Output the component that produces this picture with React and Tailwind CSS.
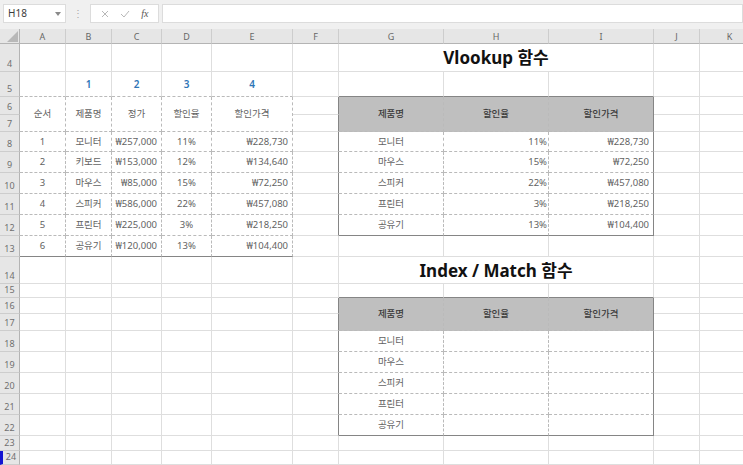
import { Fragment } from 'react';

const COLS = ['A', 'B', 'C', 'D', 'E', 'F', 'G', 'H', 'I', 'J', 'K'];
const ROWS = Array.from({ length: 21 }, (_, i) => i + 4);

// border per side: g = gridline, d = dashed table line, s = solid table frame
const RIGHT = {
  g: 'border-r border-r-[#dedede]',
  d: 'border-r border-r-[#bababa] [border-right-style:dashed]',
  s: 'border-r border-r-[#858585]',
};
const BOTTOM = {
  g: 'border-b border-b-[#dedede]',
  d: 'border-b border-b-[#bababa] [border-bottom-style:dashed]',
  s: 'border-b border-b-[#858585]',
};
const ALIGN = {
  c: 'justify-center',
  r: 'justify-end pr-[4px]',
  p: 'justify-end pr-[1px]',
};
const KIND = {
  txt: 'text-[9.5px] text-[#626262]',
  num: 'text-[10px] font-semibold text-[#2e75b6]',
  gh: 'text-[9.5px] font-medium text-[#3a3a3a] bg-[#bfbfbf]',
  title: 'text-[17px] font-bold text-[#111111]',
};
const SPAN = { c3: 'col-span-3', r2: 'row-span-2' };

const products = [
  ['1', '모니터', '₩257,000', '11%', '₩228,730'],
  ['2', '키보드', '₩153,000', '12%', '₩134,640'],
  ['3', '마우스', '₩85,000', '15%', '₩72,250'],
  ['4', '스피커', '₩586,000', '22%', '₩457,080'],
  ['5', '프린터', '₩225,000', '3%', '₩218,250'],
  ['6', '공유기', '₩120,000', '13%', '₩104,400'],
];
const lookup = [
  ['모니터', '11%', '₩228,730'],
  ['마우스', '15%', '₩72,250'],
  ['스피커', '22%', '₩457,080'],
  ['프린터', '3%', '₩218,250'],
  ['공유기', '13%', '₩104,400'],
];

const buildSheet = () => {
  const sheet = {};
  ROWS.forEach((n) => {
    sheet[n] = COLS.map(() => ({ r: 'g', b: 'g', a: 'c', k: 'txt' }));
  });
  const set = (row, col, props) => Object.assign(sheet[row][col], props);

  // titles
  set(4, 6, { t: 'Vlookup 함수', k: 'title', span: 'c3' });
  set(4, 7, { skip: true });
  set(4, 8, { skip: true });
  set(14, 6, { t: 'Index / Match 함수', k: 'title', span: 'c3' });
  set(14, 7, { skip: true });
  set(14, 8, { skip: true });

  // left table
  [1, 2, 3, 4].forEach((i) => set(5, i, { t: String(i), k: 'num' }));
  [0, 1, 2, 3, 4].forEach((c) => set(5, c, { b: 'd' }));
  ['순서', '제품명', '정가', '할인율', '할인가격'].forEach((t, c) => {
    set(6, c, { t, span: 'r2', r: 'd', b: 'd' });
    set(7, c, { skip: true });
  });
  const leftAlign = ['c', 'c', 'r', 'c', 'r'];
  products.forEach((row, i) => {
    const n = 8 + i;
    row.forEach((t, c) => set(n, c, { t, a: leftAlign[c], r: 'd', b: n === 13 ? 's' : 'd' }));
  });

  // lookup tables
  const header = ['제품명', '할인율', '할인가격'];
  const frame = (top, withValues) => {
    [6, 7, 8].forEach((c) => set(top - 1, c, { b: 's' }));
    for (let n = top; n < top + 7; n++) set(n, 5, { r: 's' });
    header.forEach((t, i) => {
      set(top, 6 + i, { t, k: 'gh', span: 'r2', r: i < 2 ? 'd' : 's', b: 'd' });
      set(top + 1, 6 + i, { skip: true });
    });
    lookup.forEach((row, i) => {
      const n = top + 2 + i;
      const b = i === 4 ? 's' : 'd';
      set(n, 6, { t: row[0], r: 'd', b });
      set(n, 7, { t: withValues ? row[1] : '', a: 'p', r: 'd', b });
      set(n, 8, { t: withValues ? row[2] : '', a: 'r', r: 's', b });
    });
  };
  frame(6, true);
  frame(16, false);
  return sheet;
};

const sheet = buildSheet();

const Cell = ({ cell }) => (
  <div
    className={`flex items-center overflow-hidden whitespace-nowrap leading-none ${RIGHT[cell.r]} ${BOTTOM[cell.b]} ${ALIGN[cell.a]} ${KIND[cell.k]} ${cell.span ? SPAN[cell.span] : ''}`}
  >
    {cell.t}
  </div>
);

const RowHead = ({ n }) => (
  <div
    className={`flex items-end justify-center pb-[3px] bg-[#e6e6e6] border-r border-r-[#b4b4b4] border-b border-b-[#cdcdcd] text-[9px] leading-none text-[#707070] ${n === 24 ? 'border-l-[3px] border-l-[#1414d2]' : ''}`}
  >
    {n}
  </div>
);

const Toolbar = () => (
  <div className="flex items-center h-[29px] bg-[#f0f0f0] pl-[3px] gap-[3px] pb-[2px]">
    <div className="flex items-center justify-between w-[63px] h-[19px] bg-white border border-[#dcdcdc] px-[4px] text-[10px] text-[#3c3c3c]">
      <span>H18</span>
      <svg width="6" height="4" viewBox="0 0 6 4">
        <path d="M0 0h6L3 4z" fill="#8a8a8a" />
      </svg>
    </div>
    <div className="w-[18px] flex justify-center text-[10px] text-[#a8a8a8]">⋮</div>
    <div className="flex items-center justify-around w-[69px] h-[19px] bg-white border border-[#dcdcdc] px-[4px]">
      <svg width="8" height="8" viewBox="0 0 8 8">
        <path d="M1 1l6 6M7 1l-6 6" stroke="#b8b8b8" strokeWidth="1" />
      </svg>
      <svg width="10" height="8" viewBox="0 0 10 8">
        <path d="M1 4l3 3 5-6" stroke="#b8b8b8" strokeWidth="1" fill="none" />
      </svg>
      <span className="text-[10px] italic font-['Liberation_Serif',serif] text-[#555555]">fx</span>
    </div>
    <div className="flex-1 h-[19px] bg-white border border-[#dcdcdc]" />
  </div>
);

const App = () => (
  <div className="w-[743px] h-[465px] overflow-hidden bg-white font-['Noto_Sans','Noto_Sans_CJK_KR',sans-serif]">
    <Toolbar />
    <div className="grid w-[760px] grid-cols-[20px_46px_46px_50px_50px_81px_46px_105px_105px_105px_46px_60px] grid-rows-[15px_28px_25px_18px_17px_20px_21px_21px_21px_21px_21px_27px_14px_16px_17px_21px_21px_21px_21px_21px_15px_14px]">
      <div className="flex items-end justify-end p-[1px] bg-[#e6e6e6] border-r border-r-[#b4b4b4] border-b border-b-[#b4b4b4]">
        <svg width="11" height="11" viewBox="0 0 11 11">
          <path d="M11 0v11H0z" fill="#b8b8b8" />
        </svg>
      </div>
      {COLS.map((c) => (
        <div
          key={c}
          className="flex items-center justify-center bg-[#e6e6e6] border-r border-r-[#cdcdcd] border-b border-b-[#b4b4b4] text-[9px] leading-none text-[#666666]"
        >
          {c}
        </div>
      ))}
      {ROWS.map((n) => (
        <Fragment key={n}>
          <RowHead n={n} />
          {sheet[n].map((cell, i) => (cell.skip ? null : <Cell key={i} cell={cell} />))}
        </Fragment>
      ))}
    </div>
  </div>
);

export default App;
